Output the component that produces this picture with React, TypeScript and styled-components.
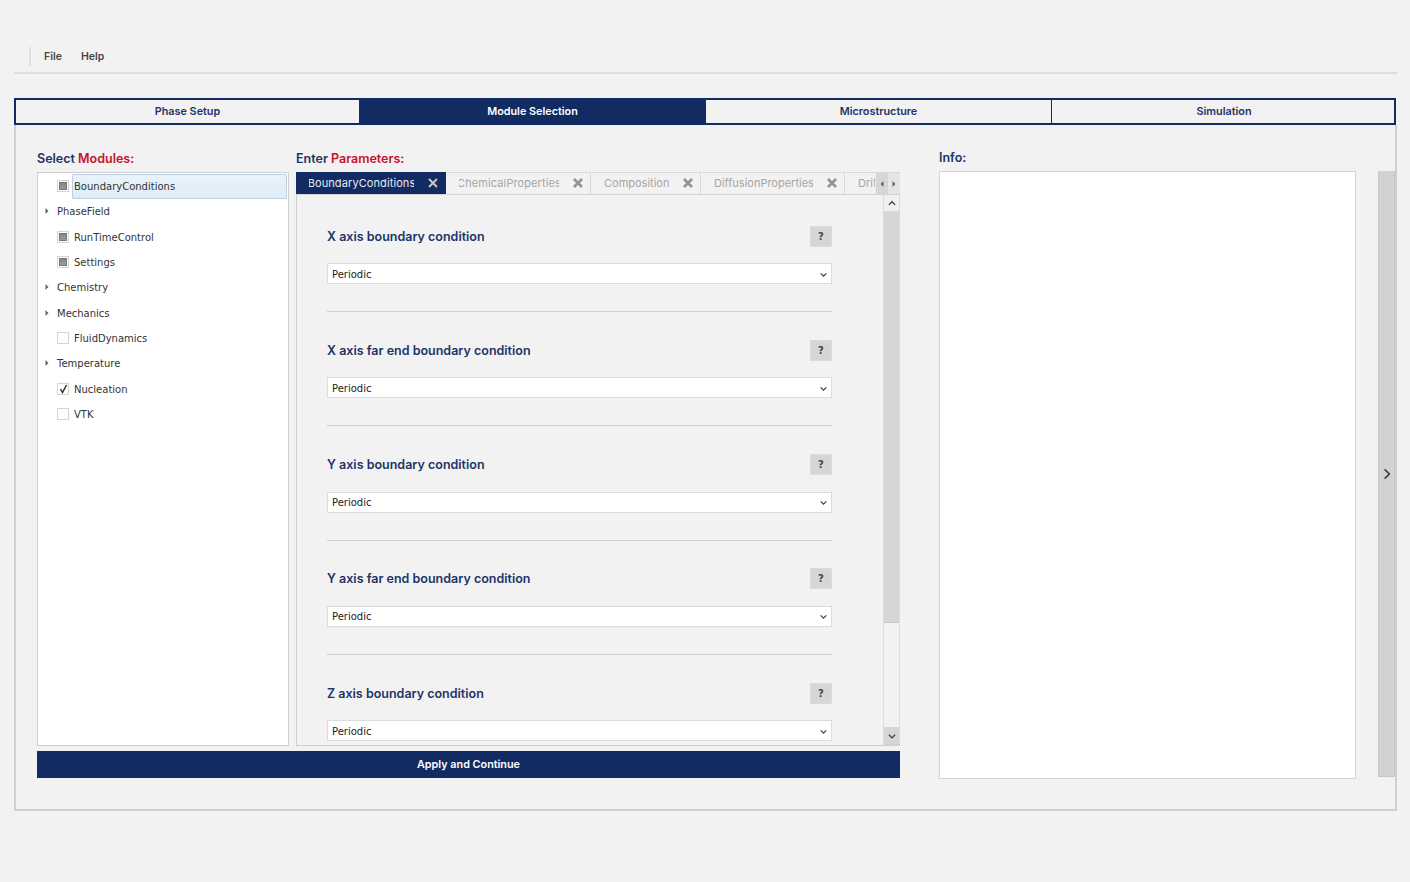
import React from 'react'
import styled, { createGlobalStyle } from 'styled-components'

const NAVY = '#122b63'
const INK = '#1d3468'
const RED = '#c8102e'
const HEAD_FONT = '"Inter", "Open Sans", sans-serif'
const TREE_FONT = '"DejaVu Sans", sans-serif'

type CheckState = 'partial' | 'checked' | 'empty'

interface TreeItem {
  label: string
  check?: CheckState
  selected?: boolean
}

const treeItems: TreeItem[] = [
  { label: 'BoundaryConditions', check: 'partial', selected: true },
  { label: 'PhaseField' },
  { label: 'RunTimeControl', check: 'partial' },
  { label: 'Settings', check: 'partial' },
  { label: 'Chemistry' },
  { label: 'Mechanics' },
  { label: 'FluidDynamics', check: 'empty' },
  { label: 'Temperature' },
  { label: 'Nucleation', check: 'checked' },
  { label: 'VTK', check: 'empty' },
]

const tabs = [
  { label: 'BoundaryConditions', width: 150, active: true, clipped: true },
  { label: 'ChemicalProperties', width: 144, clipped: true },
  { label: 'Composition', width: 109 },
  { label: 'DiffusionProperties', width: 143 },
]

const steps = ['Phase Setup', 'Module Selection', 'Microstructure', 'Simulation']

const params = [
  'X axis boundary condition',
  'X axis far end boundary condition',
  'Y axis boundary condition',
  'Y axis far end boundary condition',
  'Z axis boundary condition',
]

const Chevron = ({ dir, size = 9, weight = 1 }: { dir: 'up' | 'down' | 'right'; size?: number; weight?: number }) => {
  const d = {
    up: 'M1.5 5.5 L4 3 L6.5 5.5',
    down: 'M1.5 3 L4 5.5 L6.5 3',
    right: 'M3 1.5 L5.5 4 L3 6.5',
  }[dir]
  return (
    <svg width={size} height={size} viewBox="0 0 8 8" fill="none">
      <path d={d} stroke="#3c3c3c" strokeWidth={weight} />
    </svg>
  )
}

const Arrow = ({ dir }: { dir: 'left' | 'right' }) => (
  <svg width="6" height="8" viewBox="0 0 6 8">
    <path d={dir === 'right' ? 'M1.5 1 L4.5 4 L1.5 7 Z' : 'M4.5 1 L1.5 4 L4.5 7 Z'} fill="#666" />
  </svg>
)

const CloseIcon = ({ light }: { light?: boolean }) => (
  <svg width="10" height="10" viewBox="0 0 10 10" fill="none">
    <path d="M1 1 L9 9 M9 1 L1 9" stroke={light ? '#c9c9c0' : '#94948e'} strokeWidth={light ? 2 : 2.6} />
  </svg>
)

const App: React.FC = () => {
  return (
    <>
      <GlobalStyle />
      <Page>
        <MenuBar>
          <MenuItem>File</MenuItem>
          <MenuItem>Help</MenuItem>
        </MenuBar>

        <StepBar>
          {steps.map((s, i) => (
            <Step key={s} $active={i === 1}>{s}</Step>
          ))}
        </StepBar>

        <Frame>
          <WorkArea>
            <Columns>
              <LeftColumn>
                <Heading>Select <Accent>Modules:</Accent></Heading>
                <TreePanel>
                  {treeItems.map(item => (
                    <TreeRow key={item.label}>
                      <Gutter>{!item.check && <Arrow dir="right" />}</Gutter>
                      {item.check && (
                        <CheckBox>
                          {item.check === 'partial' && <PartialMark />}
                          {item.check === 'checked' && (
                            <svg width="9" height="10" viewBox="0 0 9 10" fill="none">
                              <path d="M1.5 5 L3.5 8.5 L7.5 1" stroke="#2b2b2b" strokeWidth="1.5" />
                            </svg>
                          )}
                        </CheckBox>
                      )}
                      <TreeLabel $selected={item.selected} $plain={!item.check}>{item.label}</TreeLabel>
                    </TreeRow>
                  ))}
                </TreePanel>
              </LeftColumn>

              <CenterColumn>
                <Heading>Enter <Accent>Parameters:</Accent></Heading>
                <TabStrip>
                  {tabs.map(t => (
                    <Tab key={t.label} $active={t.active} $width={t.width}>
                      <TabLabel $active={t.active} $clipped={t.clipped}><span>{t.label}</span></TabLabel>
                      <CloseIcon light={t.active} />
                    </Tab>
                  ))}
                  <ClippedTab>Drift</ClippedTab>
                  <TabArrow><Arrow dir="left" /></TabArrow>
                  <TabArrow $light><Arrow dir="right" /></TabArrow>
                </TabStrip>
                <ParamPanel>
                  <ParamScroll>
                    {params.map((p, i) => (
                      <ParamBlock key={p}>
                        <ParamHeader>
                          <ParamTitle>{p}</ParamTitle>
                          <HelpButton>?</HelpButton>
                        </ParamHeader>
                        <SelectBox>
                          Periodic
                          <Chevron dir="down" />
                        </SelectBox>
                        {i < params.length - 1 && <Divider />}
                      </ParamBlock>
                    ))}
                  </ParamScroll>
                  <ScrollBar>
                    <ScrollButton $top><Chevron dir="up" size={10} /></ScrollButton>
                    <ScrollThumb />
                    <ScrollTrack />
                    <ScrollButton><Chevron dir="down" size={10} /></ScrollButton>
                  </ScrollBar>
                </ParamPanel>
              </CenterColumn>
            </Columns>
            <ApplyButton>Apply and Continue</ApplyButton>
          </WorkArea>

          <InfoColumn>
            <InfoHeading>Info:</InfoHeading>
            <InfoPanel />
          </InfoColumn>

          <CollapseBar>
            <Chevron dir="right" size={20} weight={0.85} />
          </CollapseBar>
        </Frame>
      </Page>
    </>
  )
}

export default App

const GlobalStyle = createGlobalStyle`
  html, body {
    margin: 0;
    padding: 0;
    background: #f2f2f2;
  }
  * {
    box-sizing: border-box;
  }
`

const Page = styled.div`
  width: 1410px;
  height: 882px;
  padding: 45px 14px 0;
  overflow: hidden;
`

const MenuBar = styled.div`
  height: 29px;
  margin-right: -1px;
  padding: 3px 0 7px 15px;
  display: flex;
  align-items: center;
  gap: 19px;
  border-bottom: 2px solid #dedede;

  &::before {
    content: '';
    width: 2px;
    height: 19px;
    margin-right: -6px;
    background: #dfdfdf;
  }
`

const MenuItem = styled.span`
  font: 600 10.5px ${HEAD_FONT};
  color: #444;
`

const StepBar = styled.div`
  margin-top: 24px;
  height: 27px;
  display: grid;
  grid-template-columns: 343px 346px 346px 345px;
  border: 2px solid ${NAVY};
  background: #f2f2f2;
`

const Step = styled.div<{ $active?: boolean }>`
  display: flex;
  align-items: center;
  justify-content: center;
  padding-bottom: 1px;
  font: 600 10.8px ${HEAD_FONT};
  color: ${p => (p.$active ? '#fff' : INK)};
  background: ${p => (p.$active ? NAVY : 'transparent')};
  & + & {
    border-left: 1px solid ${NAVY};
  }
`

const Frame = styled.div`
  height: 686px;
  margin-right: -1px;
  display: flex;
  padding: 0 0 0 21px;
  border: 2px solid #cfcfcf;
  border-top: none;
`

const WorkArea = styled.div`
  width: 863px;
  display: flex;
  flex-direction: column;
`

const Columns = styled.div`
  display: flex;
  gap: 7px;
`

const LeftColumn = styled.div`
  width: 252px;
  display: flex;
  flex-direction: column;
`

const CenterColumn = styled.div`
  width: 604px;
  display: flex;
  flex-direction: column;
`

const Heading = styled.div`
  height: 47px;
  padding-top: 26px;
  font: 600 12.5px/16px ${HEAD_FONT};
  color: ${INK};
`

const Accent = styled.span`
  color: ${RED};
`

const TreePanel = styled.div`
  height: 574px;
  padding-top: 0.5px;
  display: grid;
  grid-auto-rows: 25.3px;
  background: #fff;
  border: 1px solid #cfcfcf;
`

const TreeRow = styled.div`
  display: flex;
  align-items: center;
  padding-left: 6px;
`

const Gutter = styled.div`
  width: 13px;
  display: flex;
  align-items: center;
`

const CheckBox = styled.div`
  width: 12px;
  height: 12px;
  display: flex;
  align-items: center;
  justify-content: center;
  background: #fff;
  border: 1px solid #d4d4d4;
  flex-shrink: 0;
`

const PartialMark = styled.div`
  width: 8px;
  height: 8px;
  background: linear-gradient(#858585, #9c9c9c);
  border: 1px solid #777;
`

const TreeLabel = styled.div<{ $selected?: boolean; $plain?: boolean }>`
  height: 25px;
  flex: ${p => (p.$selected ? 1 : '0 1 auto')};
  display: flex;
  align-items: center;
  margin-left: ${p => (p.$plain ? 0 : '3px')};
  margin-right: 1px;
  padding-top: 1px;
  padding-left: ${p => (p.$plain ? 0 : '2px')};
  font: 10px ${TREE_FONT};
  color: #333;
  ${p =>
    p.$selected &&
    `
    background: linear-gradient(#e8f3fb, #dfecf6);
    border: 1px solid #bdd0e2;
    border-radius: 1px;
    padding-left: 1px;
  `}
`

const TabStrip = styled.div`
  height: 23px;
  display: flex;
  border-bottom: 1px solid #d4d4d4;
`

const Tab = styled.div<{ $active?: boolean; $width: number }>`
  width: ${p => p.$width}px;
  flex-shrink: 0;
  display: flex;
  align-items: center;
  justify-content: space-between;
  padding: 0 ${p => (p.$active ? 8 : 7)}px 1px ${p => (p.$active ? 13 : 12)}px;
  margin-right: 1px;
  background: ${p => (p.$active ? NAVY : '#f2f2f2')};
  border-top: 1px solid ${p => (p.$active ? NAVY : '#d8d8d8')};
  border-right: ${p => (p.$active ? 'none' : '1px solid #d8d8d8')};
`

const TabLabel = styled.div<{ $active?: boolean; $clipped?: boolean }>`
  flex: 1;
  margin-right: 14px;
  display: flex;
  justify-content: ${p => (p.$clipped ? 'center' : 'flex-start')};
  overflow: hidden;
  white-space: nowrap;
  font: 11px ${HEAD_FONT};
  letter-spacing: ${p => (p.$clipped ? '0.1px' : 0)};
  color: ${p => (p.$active ? '#e6e9f0' : '#a6a6a6')};
`

const ClippedTab = styled.div`
  width: 29px;
  flex-shrink: 0;
  padding: 0 0 1px 12px;
  display: flex;
  align-items: center;
  overflow: hidden;
  white-space: nowrap;
  font: 11px ${HEAD_FONT};
  color: #a6a6a6;
  border-top: 1px solid #d8d8d8;
`

const TabArrow = styled.div<{ $light?: boolean }>`
  flex: 1;
  display: flex;
  align-items: center;
  justify-content: center;
  background: ${p => (p.$light ? '#e4e4e4' : '#d6d6d6')};
  border-left: 1px solid #e9e9e9;
  border-top: 1px solid #d8d8d8;
`

const ParamPanel = styled.div`
  height: 551px;
  display: flex;
  background: #f2f2f2;
  border: 1px solid #cfcfcf;
  border-top: none;
  border-right: none;
`

const ParamScroll = styled.div`
  flex: 1;
  padding: 31px 51px 0 30px;
  overflow: hidden;
`

const ParamBlock = styled.div`
  height: 114.3px;
`

const ParamHeader = styled.div`
  height: 20px;
  display: flex;
  align-items: center;
  justify-content: space-between;
`

const ParamTitle = styled.div`
  font: 600 12.5px ${HEAD_FONT};
  color: ${INK};
`

const HelpButton = styled.div`
  width: 22px;
  height: 21px;
  display: flex;
  align-items: center;
  justify-content: center;
  background: #d6d6d6;
  border: 1px solid #dcdcdc;
  font: 700 10px ${TREE_FONT};
  color: #444;
`

const SelectBox = styled.div`
  margin-top: 17px;
  height: 21px;
  padding: 1px 3px 0 4px;
  display: flex;
  align-items: center;
  justify-content: space-between;
  background: #fff;
  border: 1px solid #dcdcdc;
  font: 10px ${TREE_FONT};
  color: #222;
`

const Divider = styled.div`
  margin-top: 27px;
  height: 1px;
  background: #cdcdcd;
`

const ScrollBar = styled.div`
  width: 17px;
  display: flex;
  flex-direction: column;
  border-left: 1px solid #dcdcdc;
  border-right: 1px solid #dcdcdc;
  border-bottom: 1px solid #cfcfcf;
`

const ScrollButton = styled.div<{ $top?: boolean }>`
  height: 17px;
  flex-shrink: 0;
  display: flex;
  align-items: center;
  justify-content: center;
  background: ${p => (p.$top ? '#f0f0f0' : '#d6d6d6')};
  border-bottom: ${p => (p.$top ? '1px solid #dcdcdc' : 'none')};
`

const ScrollThumb = styled.div`
  height: 411px;
  flex-shrink: 0;
  background: #d6d6d6;
  border-bottom: 1px solid #c8c8c8;
`

const ScrollTrack = styled.div`
  flex: 1;
  background: #f2f2f2;
`

const ApplyButton = styled.div`
  margin-top: 5px;
  height: 27px;
  padding-bottom: 1px;
  display: flex;
  align-items: center;
  justify-content: center;
  background: ${NAVY};
  font: 600 10.8px ${HEAD_FONT};
  color: #fff;
`

const InfoColumn = styled.div`
  width: 417px;
  margin-left: 39px;
  display: flex;
  flex-direction: column;
`

const InfoHeading = styled.div`
  height: 46px;
  padding-top: 26px;
  font: 600 12.5px/14px ${HEAD_FONT};
  color: ${INK};
`

const InfoPanel = styled.div`
  height: 608px;
  background: #fff;
  border: 1px solid #d4d4d4;
`

const CollapseBar = styled.div`
  width: 17px;
  height: 606px;
  margin: 46px 0 0 22px;
  display: flex;
  align-items: center;
  justify-content: center;
  background: #d2d2d2;
  border: 1px solid #c8c8c8;
  border-top: none;
`
